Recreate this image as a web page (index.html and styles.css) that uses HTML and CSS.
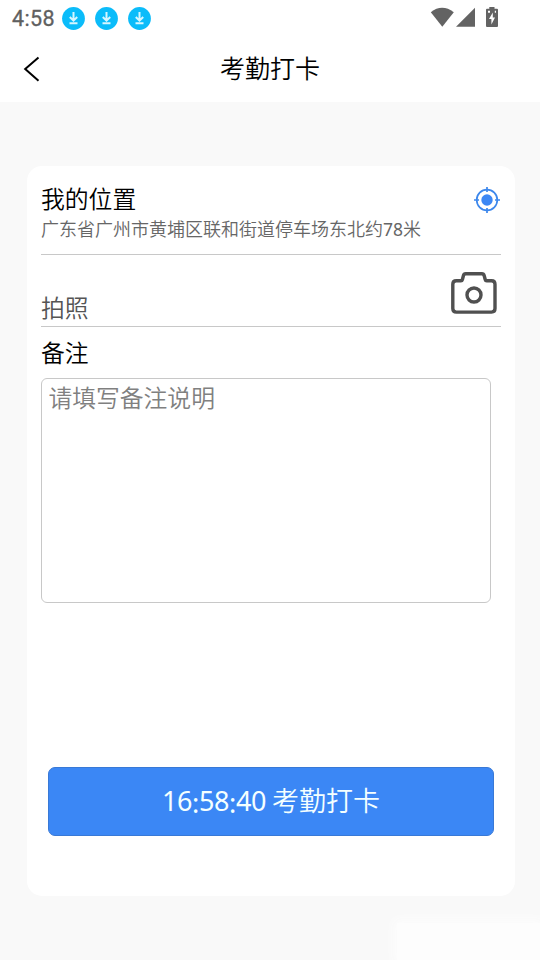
FILE: index.html
```
<!DOCTYPE html>
<html lang="zh-CN">
<head>
<meta charset="utf-8">
<title>考勤打卡</title>
<link rel="stylesheet" href="styles.css">
</head>
<body>
<div class="status">
  <span class="clock">4:58</span>
  <svg class="dl" viewBox="0 0 24 24"><circle cx="12.5" cy="12.5" r="11.4"/><path d="M12.5 6v8.5M8.8 11l3.7 3.7 3.7-3.7M8.5 17.2h8"/></svg>
  <svg class="dl" viewBox="0 0 24 24"><circle cx="12.5" cy="12.5" r="11.4"/><path d="M12.5 6v8.5M8.8 11l3.7 3.7 3.7-3.7M8.5 17.2h8"/></svg>
  <svg class="dl" viewBox="0 0 24 24"><circle cx="12.5" cy="12.5" r="11.4"/><path d="M12.5 6v8.5M8.8 11l3.7 3.7 3.7-3.7M8.5 17.2h8"/></svg>
  <svg class="signals" width="70" height="22" viewBox="0 0 70 22" fill="#636363">
    <path d="M0.8 5.2Q12 -3.6 23.8 5.2L12.3 19.8Z"/>
    <path d="M45 .8V19.8H26Z"/>
    <path fill-rule="evenodd" d="M59.3 0h5.2v1.8H67q1 0 1 1v16.3q0 1-1 1H57q-1 0-1-1V2.8q0-1 1-1h2.3ZM58 3.8v2h2v-2ZM64.8 3.8v2h1.2v-2ZM62.8 5.4L59 12h2.4v5.4L65 10.6h-2.2Z"/>
  </svg>
</div>
<header class="navbar">
  <svg class="back" width="18" height="28" viewBox="0 0 18 28"><path d="M15.5 2.5L2.2 14l13.3 11.8"/></svg>
  <h1>考勤打卡</h1>
</header>
<main class="page">
  <section class="card">
    <div class="location">
      <div>
        <h2>我的位置</h2>
        <p>广东省广州市黄埔区联和街道停车场东北约<span>78</span>米</p>
      </div>
      <svg class="target" width="28" height="28" viewBox="0 0 28 28"><circle cx="14" cy="14" r="10.3"/><path d="M14 1v5M14 22v5M1 14h5M22 14h5"/><circle class="dot" cx="14" cy="14" r="5.7"/></svg>
    </div>
    <div class="photo">
      <span>拍照</span>
      <svg class="camera" width="48" height="44" viewBox="0 0 48 44"><path d="M6.3 9.8h4.6q1.2 0 1.5-1.3l1-3.8q.5-1.9 2.3-1.9h16.2q1.8 0 2.3 1.9l1 3.8q.3 1.3 1.5 1.3h4.8q3.5 0 3.5 3.5v24.3q0 3.5-3.5 3.5h-35.2q-3.5 0-3.5-3.5V13.3q0-3.5 3.5-3.5Z"/><circle cx="24" cy="24" r="7"/></svg>
    </div>
    <h2 class="label">备注</h2>
    <textarea placeholder="请填写备注说明"></textarea>
    <button type="button"><span class="time">16<i>:</i>58<i>:</i>40</span> 考勤打卡</button>
  </section>
  <div class="glow"></div>
</main>
</body>
</html>
```

FILE: styles.css
```
* { box-sizing: border-box; }

body {
  margin: 0;
  width: 540px;
  height: 960px;
  overflow: hidden;
  display: flex;
  flex-direction: column;
  background: #f9f9f9;
  color: #000;
  font-family: "Noto Sans CJK SC", "Noto Sans", sans-serif;
  font-weight: 350;
}

h1, h2, p { margin: 0; font-weight: 350; }
svg { display: block; flex: none; }

.status {
  height: 37px;
  padding: 0 40px 0 12px;
  display: flex;
  align-items: center;
  background: #fff;
}
.clock {
  width: 49px;
  font: 400 21.5px/37px Roboto, sans-serif;
  letter-spacing: .4px;
  color: #606060;
  -webkit-text-stroke: .3px #606060;
}
.dl { width: 24px; height: 24px; margin: 0 9px 1px 0; }
.dl circle { fill: #0bbcfa; }
.dl path { fill: none; stroke: #d8f6ff; stroke-width: 2; }
.signals { margin-left: auto; margin-bottom: 1px; }

.navbar {
  height: 65px;
  display: grid;
  grid-template-columns: 60px 1fr 60px;
  align-items: center;
  background: #fff;
}
.navbar h1 {
  font-size: 25px;
  line-height: 34px;
  text-align: center;
  padding-bottom: 6px;
}
.back { margin: 0 0 2px 22.5px; fill: none; stroke: #000; stroke-width: 2; }

.page {
  flex: 1;
  position: relative;
  padding: 64px 25px 0 27px;
}
.card {
  height: 730px;
  padding: 14px;
  border-radius: 15px;
  background: #fff;
}
h2 { font-size: 23.8px; line-height: 36px; }

.location {
  height: 75px;
  display: flex;
  justify-content: space-between;
  border-bottom: 1px solid #c8c8c8;
}
.location p { font-size: 18px; line-height: 24px; color: #666; }
.location p span { font-family: "Noto Sans", sans-serif; font-weight: 400; font-size: 17.5px; line-height: 1; }
.target { margin-top: 6px; fill: none; stroke: #3c87ec; stroke-width: 1.7; }
.target .dot { fill: #3c87f4; stroke: none; }

.photo {
  height: 72px;
  display: flex;
  justify-content: space-between;
  align-items: flex-end;
  border-bottom: 1px solid #c8c8c8;
  font-size: 23.8px;
  line-height: 36px;
  color: #555;
}
.photo span { padding-bottom: 1px; }
.camera {
  margin: 0 3px 11px 0;
  fill: none;
  stroke: #505050;
  stroke-width: 3.4;
}
.label { padding-top: 7px; }

textarea {
  display: block;
  width: 450px;
  height: 225px;
  margin: 8px 0 0;
  padding: 0 6.4px;
  border: 1px solid #c8c8c8;
  border-radius: 6px;
  resize: none;
  background: #fff;
  font: inherit;
  font-size: 23.8px;
  line-height: 36px;
}
textarea::placeholder { color: #808080; opacity: 1; }

button {
  display: block;
  width: 446px;
  height: 69px;
  margin: 164px 0 0 7px;
  padding: 0;
  border: 1px solid #3979d6;
  border-radius: 7px;
  background: #3b87f5;
  color: #f4ffff;
  font: inherit;
  font-size: 27px;
  line-height: 40px;
}
.time {
  font-family: "Noto Sans", sans-serif;
  font-weight: 400;
  font-size: 27px;
  letter-spacing: -.4px;
}
.time i { font-style: normal; vertical-align: -1.5px; }

.glow {
  position: absolute;
  right: 0;
  bottom: 0;
  width: 143px;
  height: 37px;
  background: #fdfdfd;
  box-shadow: 0 0 10px 3px #fdfdfd;
}
```
